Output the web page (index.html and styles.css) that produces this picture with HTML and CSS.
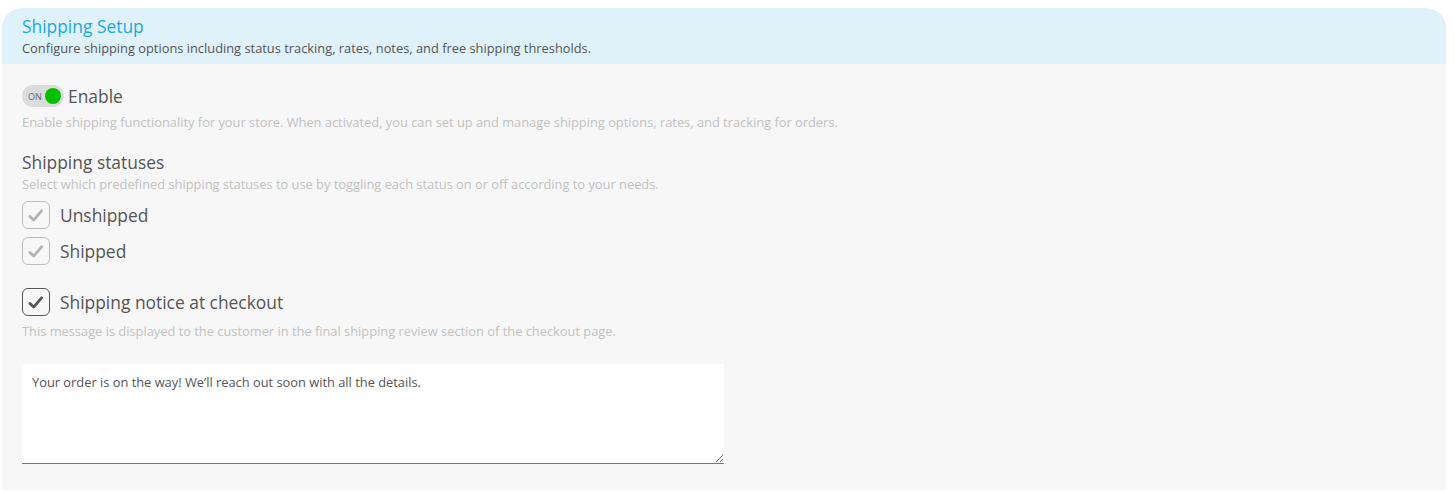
FILE: index.html
```html
<!DOCTYPE html>
<html lang="en">
<head>
<meta charset="utf-8">
<title>Shipping Setup</title>
<link rel="stylesheet" href="styles.css">
</head>
<body>
<section class="card">
  <header class="card-head">
    <h1 class="card-title">Shipping Setup</h1>
    <p class="card-sub">Configure shipping options including status tracking, rates, notes, and free shipping thresholds.</p>
  </header>
  <div class="card-body">
    <div class="row toggle-row">
      <span class="toggle"><span class="toggle-text">ON</span><span class="knob"></span></span>
      <span class="label">Enable</span>
    </div>
    <p class="hint hint-enable">Enable shipping functionality for your store. When activated, you can set up and manage shipping options, rates, and tracking for orders.</p>

    <h2 class="label section-title">Shipping statuses</h2>
    <p class="hint hint-status">Select which predefined shipping statuses to use by toggling each status on or off according to your needs.</p>

    <div class="row check-row">
      <span class="check"><svg viewBox="0 0 28 28" width="28" height="28"><path d="M7.5 15.5 L11.5 19.5 L20 9.5" fill="none" stroke="#b3b3b3" stroke-width="3" stroke-linecap="round" stroke-linejoin="round"/></svg></span>
      <span class="label">Unshipped</span>
    </div>
    <div class="row check-row">
      <span class="check"><svg viewBox="0 0 28 28" width="28" height="28"><path d="M7.5 15.5 L11.5 19.5 L20 9.5" fill="none" stroke="#b3b3b3" stroke-width="3" stroke-linecap="round" stroke-linejoin="round"/></svg></span>
      <span class="label">Shipped</span>
    </div>

    <div class="row check-row notice-row">
      <span class="check check-dark"><svg viewBox="0 0 28 28" width="28" height="28"><path d="M7.5 15.5 L11.5 19.5 L20 9.5" fill="none" stroke="#555" stroke-width="3" stroke-linecap="round" stroke-linejoin="round"/></svg></span>
      <span class="label">Shipping notice at checkout</span>
    </div>
    <p class="hint hint-notice">This message is displayed to the customer in the final shipping review section of the checkout page.</p>

    <textarea class="notice-text">Your order is on the way! We’ll reach out soon with all the details.</textarea>
  </div>
</section>
</body>
</html>
```

FILE: styles.css
```css
* { box-sizing: border-box; }
html, body { margin: 0; padding: 0; background: #fff; }
body {
  font-family: "Open Sans", "Noto Sans", sans-serif;
  color: #555;
  padding: 8px 9px 0 2px;
}
.card {
  border-radius: 20px 20px 0 0;
  overflow: hidden;
  background: #f7f7f7;
  height: 482px;
}
.card-head {
  background: #dff2fa;
  padding: 8px 20px 0 20px;
  height: 56px;
}
.card-title {
  margin: 0;
  font-size: 17.4px;
  font-weight: 400;
  color: #1ba9dc;
  line-height: 20px;
}
.card-sub {
  margin: 4px 0 0;
  font-size: 12.85px;
  line-height: 16px;
  color: #555;
}
.card-body {
  padding: 21px 20px 0 20px;
  display: flex;
  flex-direction: column;
  align-items: flex-start;
}
.row { display: flex; align-items: center; }
.toggle {
  width: 42px;
  height: 22px;
  border-radius: 11px;
  background: #dcdcdc;
  display: flex;
  align-items: center;
  justify-content: space-between;
  padding: 0 3px 0 6px;
}
.toggle-text { font-size: 9px; color: #666; line-height: 1; }
.knob { width: 16px; height: 16px; border-radius: 50%; background: #00c000; }
.label {
  font-size: 17.4px;
  color: #555;
  font-weight: 400;
  line-height: 22px;
}
.toggle-row .label { margin-left: 4px; }
.hint {
  margin: 0;
  font-size: 12.85px;
  line-height: 16px;
  color: #c2c2c2;
}
.hint-enable { margin-top: 7px; }
.section-title { margin: 21px 0 0; }
.hint-status { margin-top: 3px; }
.check-row { margin-top: 9px; }
.check-row + .check-row { margin-top: 8px; }
.check-row .label { margin-left: 10px; }
.check {
  width: 28px; height: 28px;
  border: 1px solid #bdbdbd;
  border-radius: 6px;
  background: #f7f7f7;
  display: flex; align-items: center; justify-content: center;
}
.check svg { display: block; width: 26px; height: 26px; }
.check-dark { border-color: #555; }
.check-row.notice-row { margin-top: 23px; }
.hint-notice { margin-top: 7px; }
.notice-text {
  margin-top: 25px;
  width: 702px;
  height: 100px;
  border: none;
  border-bottom: 1px solid #777;
  background: #fff;
  font-family: inherit;
  font-size: 12.85px;
  color: #555;
  padding: 10px 10px;
  line-height: 16px;
  outline: none;
}
```
